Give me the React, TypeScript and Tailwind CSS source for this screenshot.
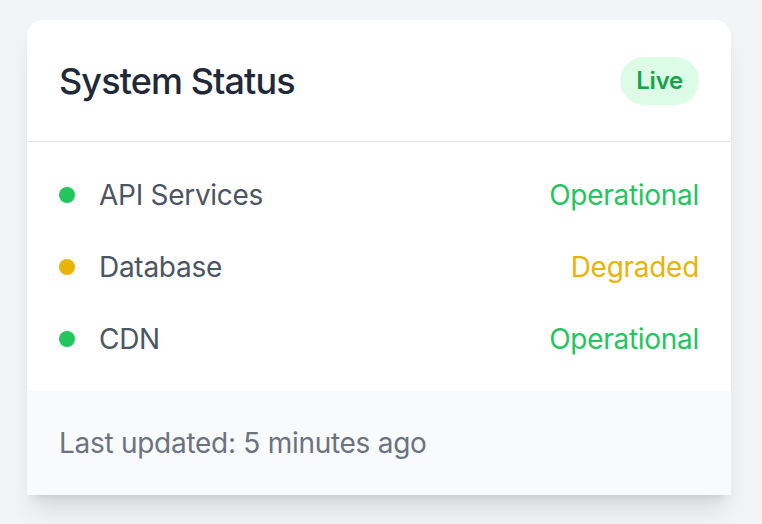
import React from "react";

const rows = [
  { name: "API Services", status: "Operational", dot: "bg-[#22c55e]", text: "text-[#22c55e]" },
  { name: "Database", status: "Degraded", dot: "bg-[#eab308]", text: "text-[#eab308]" },
  { name: "CDN", status: "Operational", dot: "bg-[#22c55e]", text: "text-[#22c55e]" },
];

export default function App() {
  return (
    <div className="min-h-[524px] w-full bg-[#f3f4f6] pt-[20px] pl-[27px]" style={{ fontFamily: "Inter, 'Noto Sans', sans-serif" }}>
      <div className="w-[704px] rounded-t-2xl bg-white shadow-xl">
        <div className="flex items-center justify-between border-b border-[#e5e7eb] px-8 pt-[33px] pb-8">
          <h2 className="text-[36px] leading-[56px] font-medium tracking-[-0.025em] text-[#1f2937]">System Status</h2>
          <span className="rounded-full bg-[#dcfce7] px-4 py-2 text-[24px] leading-[32px] font-semibold tracking-[-0.01em] text-[#16a34a]">Live</span>
        </div>
        <div className="flex flex-col gap-8 px-8 pt-[33px] pb-8">
          {rows.map((r) => (
            <div key={r.name} className="flex items-center justify-between h-10">
              <div className="flex items-center gap-6">
                <span className={`h-4 w-4 rounded-full ${r.dot}`} />
                <span className="text-[28px] leading-[40px] tracking-[-0.01em] text-[#4b5563]">{r.name}</span>
              </div>
              <span className={`text-[28px] leading-[40px] tracking-[-0.01em] ${r.text}`}>{r.status}</span>
            </div>
          ))}
        </div>
        <div className="bg-[#f9fafb] px-8 py-8">
          <p className="text-[28px] leading-[40px] tracking-[-0.01em] text-[#6b7280]">Last updated: 5 minutes ago</p>
        </div>
      </div>
    </div>
  );
}
